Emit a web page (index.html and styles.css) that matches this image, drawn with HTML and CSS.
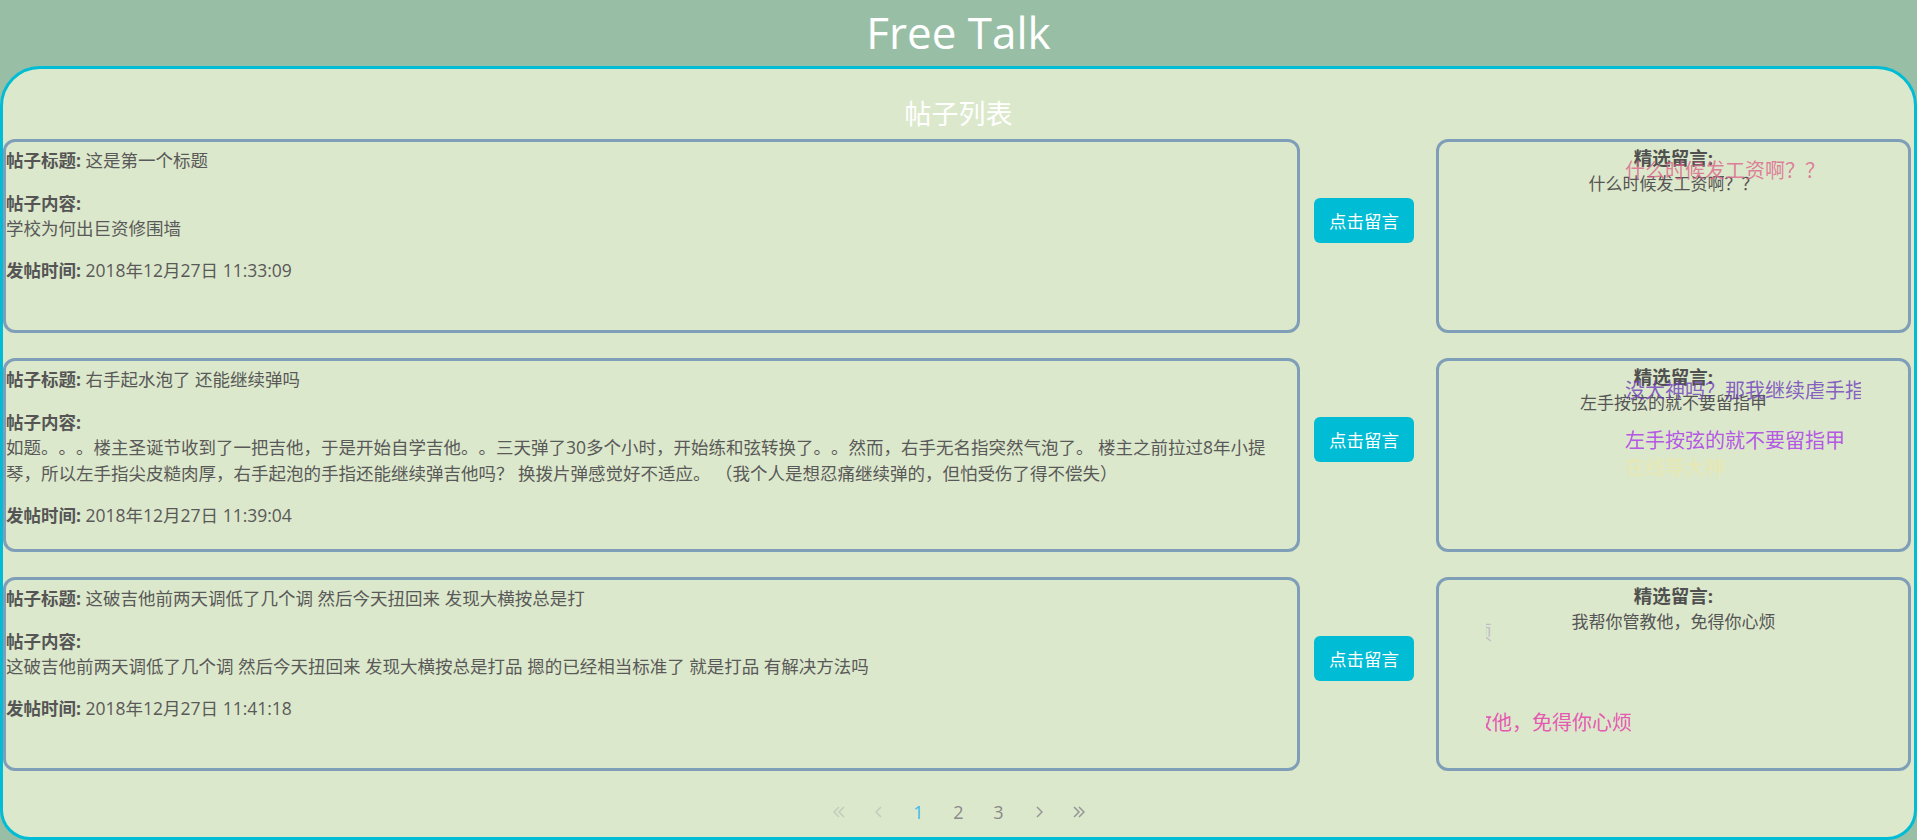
FILE: index.html
```html
<!DOCTYPE html>
<html lang="zh-CN">
<head>
<meta charset="utf-8">
<title>Free Talk</title>
<link rel="stylesheet" href="styles.css">
</head>
<body>
<header class="site-header">Free Talk</header>
<main class="board">
  <h2 class="board-title">帖子列表</h2>
  <div class="rows">
    <div class="row">
      <section class="post">
        <p class="line title-line"><b>帖子标题:</b> 这是第一个标题</p>
        <p class="line label-line"><b>帖子内容:</b></p>
        <div class="line content">学校为何出巨资修围墙</div>
        <p class="line time-line"><b>发帖时间:</b> 2018年12月27日 11:33:09</p>
      </section>
      <div class="action"><button class="reply-btn">点击留言</button></div>
      <aside class="picked">
        <div class="picked-title">精选留言:</div>
        <div class="picked-text">什么时候发工资啊？？</div>
        <div class="danmaku">
          <span class="dm dm-pink" style="top:17px;left:139px">什么时候发工资啊？？</span>
        </div>
      </aside>
    </div>
    <div class="row">
      <section class="post">
        <p class="line title-line"><b>帖子标题:</b> 右手起水泡了 还能继续弹吗</p>
        <p class="line label-line"><b>帖子内容:</b></p>
        <div class="line content">如题。。。楼主圣诞节收到了一把吉他，于是开始自学吉他。。三天弹了30多个小时，开始练和弦转换了。。然而，右手无名指突然气泡了。 楼主之前拉过8年小提琴，所以左手指尖皮糙肉厚，右手起泡的手指还能继续弹吉他吗？ 换拨片弹感觉好不适应。 （我个人是想忍痛继续弹的，但怕受伤了得不偿失）</div>
        <p class="line time-line"><b>发帖时间:</b> 2018年12月27日 11:39:04</p>
      </section>
      <div class="action"><button class="reply-btn">点击留言</button></div>
      <aside class="picked">
        <div class="picked-title">精选留言:</div>
        <div class="picked-text">左手按弦的就不要留指甲</div>
        <div class="danmaku">
          <span class="dm dm-purple" style="top:18px;left:139px">没大神吗？那我继续虐手指</span>
          <span class="dm dm-violet" style="top:68px;left:139px">左手按弦的就不要留指甲</span>
          <span class="dm dm-yellow" style="top:95px;left:139px">在线等大神</span>
        </div>
      </aside>
    </div>
    <div class="row">
      <section class="post">
        <p class="line title-line"><b>帖子标题:</b> 这破吉他前两天调低了几个调 然后今天扭回来 发现大横按总是打</p>
        <p class="line label-line"><b>帖子内容:</b></p>
        <div class="line content">这破吉他前两天调低了几个调 然后今天扭回来 发现大横按总是打品 摁的已经相当标准了 就是打品 有解决方法吗</div>
        <p class="line time-line"><b>发帖时间:</b> 2018年12月27日 11:41:18</p>
      </section>
      <div class="action"><button class="reply-btn">点击留言</button></div>
      <aside class="picked">
        <div class="picked-title">精选留言:</div>
        <div class="picked-text">我帮你管教他，免得你心烦</div>
        <div class="danmaku">
          <span class="dm dm-grey" style="top:41px;left:-234px">我帮你管教他，免得你心烦</span>
          <span class="dm dm-rose" style="top:131px;left:-94px">我帮你管教他，免得你心烦</span>
        </div>
      </aside>
    </div>
  </div>
  <nav class="pager">
    <span class="pg pg-off"><svg width="12" height="14" viewBox="0 0 12 14"><polyline points="6,2 1,7 6,12" /><polyline points="11,2 6,7 11,12" /></svg></span>
    <span class="pg pg-off"><svg width="8" height="14" viewBox="0 0 8 14"><polyline points="6,2 1,7 6,12" /></svg></span>
    <span class="pg pg-active">1</span>
    <span class="pg">2</span>
    <span class="pg">3</span>
    <span class="pg pg-arrow"><svg width="8" height="14" viewBox="0 0 8 14"><polyline points="2,2 7,7 2,12" /></svg></span>
    <span class="pg pg-arrow"><svg width="12" height="14" viewBox="0 0 12 14"><polyline points="1,2 6,7 1,12" /><polyline points="6,2 11,7 6,12" /></svg></span>
  </nav>
</main>
</body>
</html>
```
FILE: styles.css
```css
html, body {
  margin: 0;
  padding: 0;
  height: 840px;
  overflow: hidden;
}
body {
  background: #98bfa6;
  font-family: "Open Sans", "Noto Sans CJK SC", sans-serif;
  color: #595959;
  text-spacing-trim: space-all;
}
.site-header {
  height: 66px;
  line-height: 64px;
  text-align: center;
  color: #ffffff;
  font-family: "Open Sans", "Noto Sans", sans-serif;
  font-size: 44px;
}
.board {
  box-sizing: border-box;
  height: 774px;
  border: 3px solid #00bcd4;
  border-radius: 40px 40px 30px 30px;
  background: #dce8cb;
  overflow: hidden;
}
.board-title {
  margin: 0;
  padding-top: 28px;
  height: 42px;
  line-height: 32px;
  font-family: "Noto Sans CJK SC", sans-serif;
  font-size: 27px;
  font-weight: normal;
  color: #ffffff;
  text-align: center;
}
.rows {
  display: flex;
  flex-direction: column;
  gap: 25px;
}
.row {
  display: grid;
  grid-template-columns: 1297px 136px 475px;
  height: 194px;
}
.post {
  box-sizing: border-box;
  border: 3px solid #7f9fb8;
  border-radius: 12px;
  padding: 6px 0 0 0;
  font-size: 17.5px;
}
.line {
  margin: 0;
  line-height: 24px;
}
.line b {
  font-weight: bold;
  color: #555555;
}
.label-line {
  margin-top: 19px;
}
.content {
  line-height: 26px;
  padding-right: 20px;
}
.time-line {
  margin-top: 17px;
}
.action {
  display: flex;
  align-items: center;
  justify-content: center;
  padding-bottom: 32px;
  padding-right: 8px;
}
.reply-btn {
  width: 100px;
  height: 45px;
  border: none;
  border-radius: 6px;
  background: #00bcd4;
  color: #ffffff;
  font-family: "Noto Sans CJK SC", sans-serif;
  font-size: 17.5px;
  padding: 0;
}
.picked {
  position: relative;
  box-sizing: border-box;
  border: 3px solid #7f9fb8;
  border-radius: 12px;
  padding-top: 3px;
  text-align: center;
  font-size: 17px;
  line-height: 26px;
}
.picked-title {
  font-weight: bold;
  font-size: 18.5px;
  color: #505050;
}
.picked-text {
  color: #555555;
}
.danmaku {
  position: absolute;
  top: 0;
  bottom: 0;
  left: 10%;
  right: 10%;
  overflow: hidden;
}
.dm {
  position: absolute;
  white-space: nowrap;
  font-size: 20px;
  line-height: 24px;
}
.dm-pink { color: rgba(220, 100, 140, 0.8); }
.dm-purple { color: rgba(110, 60, 190, 0.8); }
.dm-violet { color: rgba(175, 70, 230, 0.9); }
.dm-yellow { color: rgba(235, 232, 170, 0.8); }
.dm-grey { color: rgba(180, 170, 200, 0.7); }
.dm-rose { color: rgba(230, 70, 175, 0.9); }
.pager {
  display: flex;
  justify-content: center;
  margin-top: 26px;
  height: 30px;
}
.pg {
  width: 40px;
  height: 30px;
  display: flex;
  align-items: center;
  justify-content: center;
  font-size: 18px;
  color: #8a8a8a;
}
.pg svg polyline {
  fill: none;
  stroke: currentColor;
  stroke-width: 1.5;
}
.pg-off { color: #c3ccbb; }
.pg-active { color: #41b8ee; }
.pg-arrow { color: #969696; }
```
